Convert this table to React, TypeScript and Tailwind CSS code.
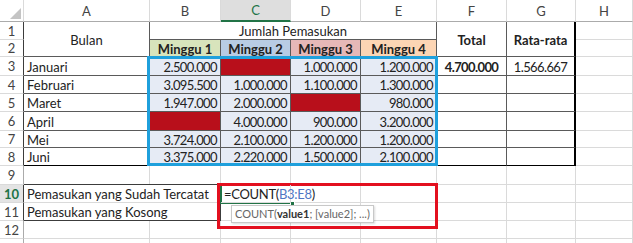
import React from 'react';

const G = 'border-r border-b border-[#dadada]';
const T = 'border-r border-b border-[#5a5a5a]';
const NUM = 'tracking-[-0.6px]';
const DATA = `bg-[#e6ebf5] justify-end ${NUM}`;
const RED = 'bg-[#b80f1b]';

const Cell: React.FC<{ className?: string; children?: React.ReactNode }> = ({ className = '', children }) => (
    <div className={`flex items-center whitespace-nowrap px-[3px] pt-px ${className}`}>{children}</div>
);

const RowHead: React.FC<{ n: number; table?: boolean; active?: boolean }> = ({ n, table, active }) => (
    <div className={`flex items-center justify-center border-b border-b-[#dadada] border-r ${table ? 'border-r-[#3c3c3c]' : 'border-r-[#ababab]'} ${active ? 'bg-[#e4e4e4] text-[#217346] font-bold' : 'text-[#444]'}`}>
        {n}
    </div>
);

const months: [string, (string | null)[], string, string][] = [
    ['Januari', ['2.500.000', null, '1.000.000', '1.200.000'], '4.700.000', '1.566.667'],
    ['Februari', ['3.095.500', '1.000.000', '1.100.000', '1.300.000'], '', ''],
    ['Maret', ['1.947.000', '2.000.000', null, '980.000'], '', ''],
    ['April', [null, '4.000.000', '900.000', '3.200.000'], '', ''],
    ['Mei', ['3.724.000', '2.100.000', '1.200.000', '1.200.000'], '', ''],
    ['Juni', ['3.375.000', '2.220.000', '1.500.000', '2.100.000'], '', ''],
];

export default function App() {
    return (
        <div className="relative w-[633px] h-[243px] overflow-hidden bg-white font-['Lato',sans-serif] text-[13px] leading-[16px] text-[#222]">
            <div className="grid grid-cols-[24px_126px_71px_70px_70px_76px_70px_69px_57px] grid-rows-[22px_18px_17px_19px_18px_18px_19px_17px_18px_19px_18px_18px_18px_4px]">
                {/* column headers */}
                <div className="relative border-r border-b border-r-[#dadada] border-b-[#ababab]">
                    <svg className="absolute right-[2px] bottom-[2px]" width="11" height="11" viewBox="0 0 11 11">
                        <polygon points="11,0 11,11 0,11" fill="#c4c4c4" />
                    </svg>
                </div>
                {['A', 'B', 'C', 'D', 'E', 'F', 'G', 'H'].map(l => (
                    <div key={l} className={`flex items-center justify-center border-r border-r-[#dadada] ${l === 'C' ? 'bg-[#dedede] text-[#217346] border-b-2 border-b-[#217346]' : 'text-[#444] border-b border-b-[#ababab]'}`}>
                        {l}
                    </div>
                ))}

                {/* row 1 */}
                <RowHead n={1} table />
                <Cell className={`row-span-2 justify-center ${T}`}>Bulan</Cell>
                <Cell className={`col-span-4 justify-center ${T}`}>Jumlah Pemasukan</Cell>
                <Cell className={`row-span-2 justify-center font-bold ${T}`}>Total</Cell>
                <Cell className={`row-span-2 justify-center font-bold ${T} border-r-2 border-r-black`}>Rata-rata</Cell>
                <Cell className={G} />

                {/* row 2 */}
                <RowHead n={2} table />
                <Cell className={`justify-center font-bold bg-[#d8e4bc] ${T}`}>Minggu 1</Cell>
                <Cell className={`justify-center font-bold bg-[#b8cce4] ${T}`}>Minggu 2</Cell>
                <Cell className={`justify-center font-bold bg-[#e6b8b7] ${T}`}>Minggu 3</Cell>
                <Cell className={`justify-center font-bold bg-[#fcd5b4] ${T}`}>Minggu 4</Cell>
                <Cell className={G} />

                {/* rows 3-8 */}
                {months.map(([name, vals, total, avg], i) => (
                    <React.Fragment key={name}>
                        <RowHead n={i + 3} table />
                        <Cell className={`${T} ${i === 5 ? 'border-b-black' : ''}`}>{name}</Cell>
                        {vals.map((v, j) => (
                            <Cell key={j} className={`${T} ${v === null ? RED : DATA} ${i === 5 ? 'border-b-black' : ''}`}>{v}</Cell>
                        ))}
                        <Cell className={`justify-center font-bold ${NUM} ${T} ${i === 5 ? 'border-b-black' : ''}`}>{total}</Cell>
                        <Cell className={`justify-center ${NUM} ${T} border-r-2 border-r-black ${i === 5 ? 'border-b-black' : ''}`}>{avg}</Cell>
                        <Cell className={G} />
                    </React.Fragment>
                ))}

                {/* row 9 */}
                <RowHead n={9} />
                {Array.from({ length: 8 }, (_, k) => <Cell key={k} className={G} />)}

                {/* row 10 */}
                <RowHead n={10} table active />
                <Cell className="col-span-2 border-t border-t-[#3c3c3c] border-r border-r-[#3c3c3c] border-b border-b-[#dadada] -mt-px">Pemasukan yang Sudah Tercatat</Cell>
                <Cell className={`relative z-10 overflow-visible tracking-[-0.3px] ${G}`}>
                    <span>=COUNT(</span>
                    <span className="inline-block w-px h-[14px] bg-black" />
                    <span className="text-[#4f76c4]">B3:E8</span>
                    <span>)</span>
                </Cell>
                {Array.from({ length: 5 }, (_, k) => <Cell key={k} className={G} />)}

                {/* row 11 */}
                <RowHead n={11} table />
                <Cell className="col-span-2 border-r border-b border-[#3c3c3c]">Pemasukan yang Kosong</Cell>
                {Array.from({ length: 6 }, (_, k) => <Cell key={k} className={G} />)}

                {/* row 12 */}
                <RowHead n={12} />
                {Array.from({ length: 8 }, (_, k) => <Cell key={k} className={G} />)}

                {/* row 13 partial */}
                <div className="border-r border-r-[#ababab]" />
                {Array.from({ length: 8 }, (_, k) => <div key={k} className="border-r border-[#dadada]" />)}
            </div>

            {/* active cell C10 */}
            <div className="absolute left-[220px] top-[185px] w-[72px] h-[19px] border-l-2 border-b-2 border-[#217346]" />
            <div className="absolute left-[290px] top-[201px] w-[5px] h-[5px] bg-[#217346] border border-white" />

            {/* selection range B3:E8 */}
            <div className="absolute left-[147px] top-[56px] w-[291px] h-[110px] border-[3px] border-[#1fa0dc]" />

            {/* function tooltip */}
            <div className="absolute left-[231px] top-[205px] h-[18px] px-[3px] flex items-center bg-white border border-[#c8c8c8] shadow-[1px_1px_2px_rgba(0,0,0,0.15)] text-[11px] text-[#666] whitespace-nowrap">
                COUNT(<span className="font-bold text-[#333]">value1</span>; [value2]; ...)
            </div>

            {/* annotation box */}
            <div className="absolute left-[217px] top-[183px] w-[221px] h-[46px] border-[3px] border-[#e3101f]" />
        </div>
    );
}
